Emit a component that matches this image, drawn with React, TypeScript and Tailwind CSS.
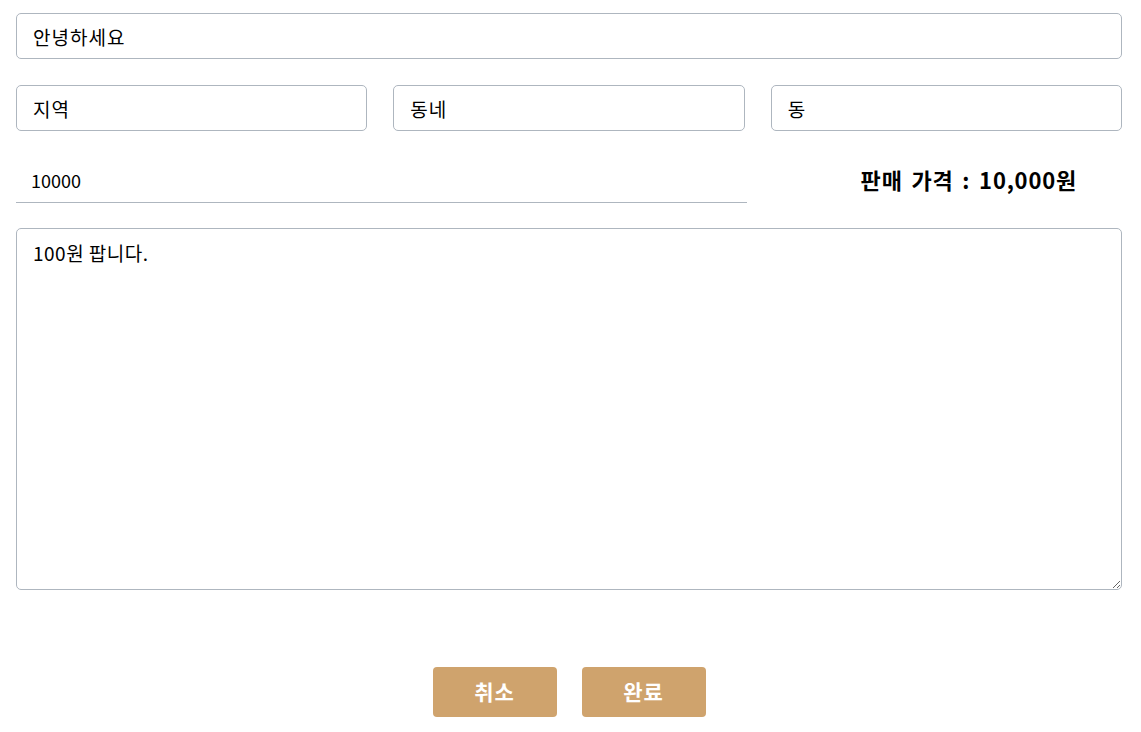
import React from "react";

const font = { fontFamily: '"Noto Sans CJK KR", "Noto Sans", sans-serif' };

export default function App() {
  const inputCls =
    "w-full h-[46px] rounded-[5px] border border-[#aeb6bf] bg-white px-4 text-[19px] tracking-[1px] text-black outline-none";
  return (
    <div className="bg-white w-[1141px] h-[732px] pl-4 pr-[19px] pt-[13px]" style={font}>
      <div className="flex flex-col gap-[26px]">
        <input className={inputCls} defaultValue="안녕하세요" />
        <div className="grid grid-cols-3 gap-[26px]">
          <input className={inputCls} defaultValue="지역" />
          <input className={inputCls} defaultValue="동네" />
          <input className={inputCls} defaultValue="동" />
        </div>
        <div className="flex items-center">
          <input
            className="w-[731px] h-[46px] border-0 border-b border-[#aeb6bf] bg-white px-[15px] text-[18px] text-black outline-none"
            defaultValue="10000"
          />
          <div className="flex-1 flex justify-end pr-[45px] text-[22px] font-bold text-black -mt-[2px] tracking-[0.8px] [word-spacing:3px]">
            판매 가격 : 10,000원
          </div>
        </div>
        <textarea
          className="-mt-[1px] w-full h-[362px] rounded-[5px] border border-[#aeb6bf] bg-white px-4 py-[10px] text-[19px] tracking-[0.5px] text-black outline-none"
          defaultValue="100원 팝니다."
        />
      </div>
      <div className="flex justify-center gap-[25px] mt-[77px]">
        <button className="w-[124px] h-[50px] rounded-[4px] bg-[#cfa36d] text-white text-[21px] font-bold tracking-[1px]">
          취소
        </button>
        <button className="w-[124px] h-[50px] rounded-[4px] bg-[#cfa36d] text-white text-[21px] font-bold tracking-[1px]">
          완료
        </button>
      </div>
    </div>
  );
}
